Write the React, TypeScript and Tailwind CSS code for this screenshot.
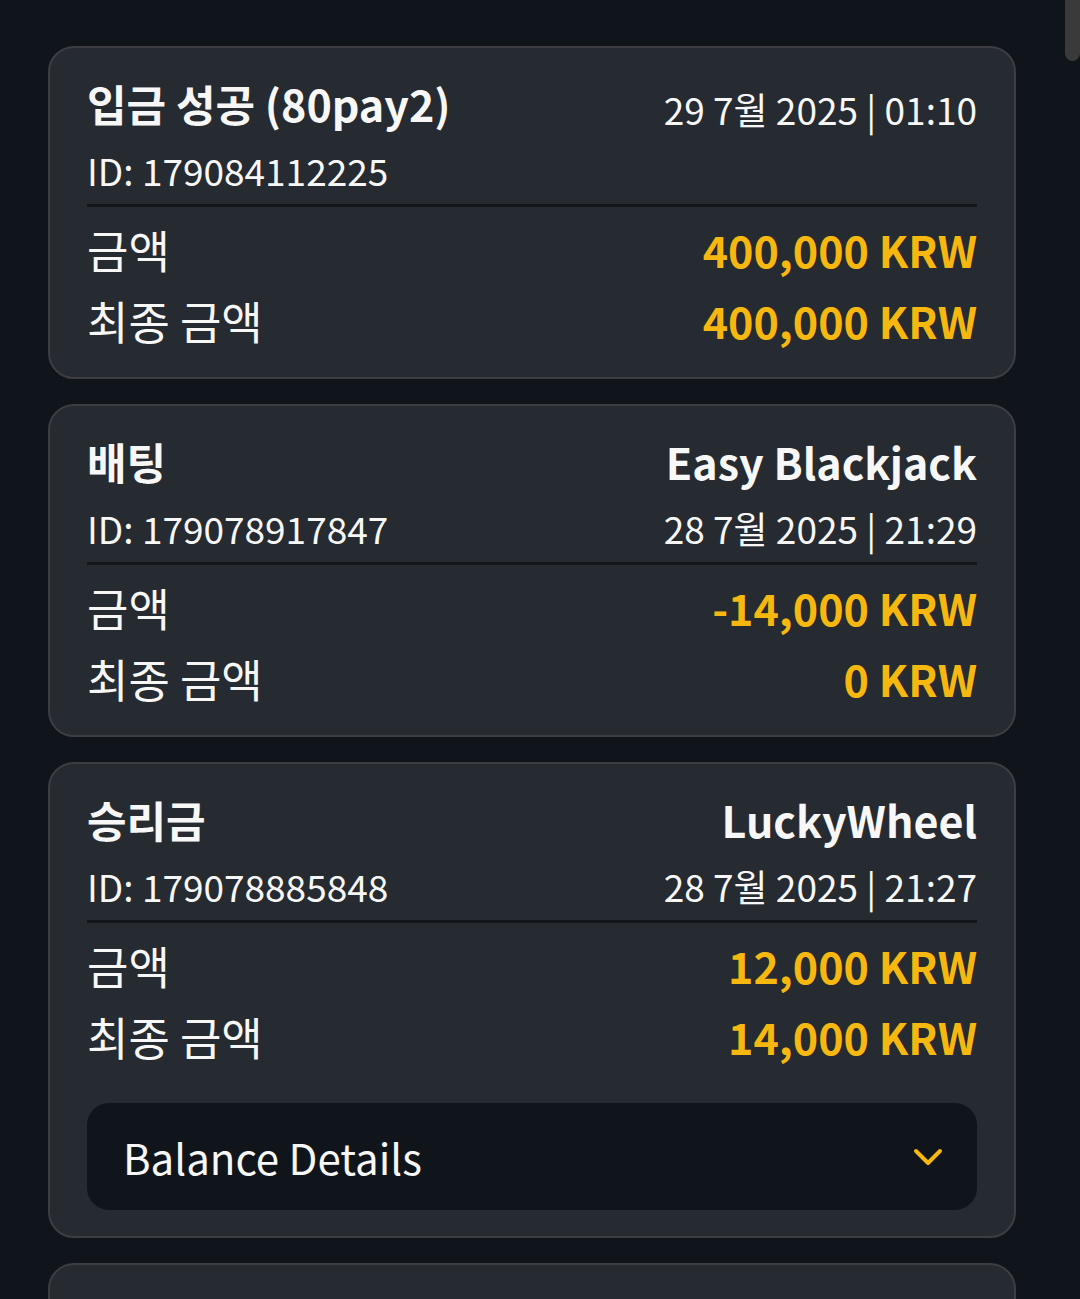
import { ChevronDown } from "lucide-react";

type Tx = {
  title: string;
  id: string;
  game?: string;
  date: string;
  amount: string;
  final: string;
  details?: boolean;
};

const txs: Tx[] = [
  {
    title: "입금 성공 (80pay2)",
    id: "179084112225",
    date: "29 7월 2025 | 01:10",
    amount: "400,000 KRW",
    final: "400,000 KRW",
  },
  {
    title: "배팅",
    id: "179078917847",
    game: "Easy Blackjack",
    date: "28 7월 2025 | 21:29",
    amount: "-14,000 KRW",
    final: "0 KRW",
  },
  {
    title: "승리금",
    id: "179078885848",
    game: "LuckyWheel",
    date: "28 7월 2025 | 21:27",
    amount: "12,000 KRW",
    final: "14,000 KRW",
    details: true,
  },
  {
    title: "입금 성공 (80pay2)",
    id: "179078012331",
    date: "28 7월 2025 | 20:02",
    amount: "20,000 KRW",
    final: "20,000 KRW",
  },
];

function TxCard({ tx }: { tx: Tx }) {
  return (
    <div className="rounded-[26px] border-2 border-[#3c3e43] bg-[#262a31] px-[37px] pt-[27px] pb-[21px]">
      {tx.game ? (
        <>
          <div className="flex items-baseline justify-between h-[56px] leading-[56px]">
            <span className="text-[43px] font-semibold">{tx.title}</span>
            <span className="text-[43px] font-semibold">{tx.game}</span>
          </div>
          <div className="mt-[15px] flex items-baseline justify-between h-[48px] leading-[48px] text-[37px]">
            <span>ID: {tx.id}</span>
            <span>{tx.date}</span>
          </div>
        </>
      ) : (
        <>
          <div className="flex items-end justify-between h-[56px] leading-[56px]">
            <span className="text-[43px] font-semibold">{tx.title}</span>
            <span className="text-[37px] leading-[44px]">{tx.date}</span>
          </div>
          <div className="mt-[15px] h-[48px] leading-[48px] text-[37px]">ID: {tx.id}</div>
        </>
      )}

      <div className="mt-[10px] h-[3px] bg-[#13171c]" />

      <div className="pt-[7px]">
        <div className="flex items-center justify-between h-[71px]">
          <span className="text-[45px]">금액</span>
          <span className="text-[43px] font-semibold text-[#f6b80f]">{tx.amount}</span>
        </div>
        <div className="flex items-center justify-between h-[71px]">
          <span className="text-[45px]">최종 금액</span>
          <span className="text-[43px] font-semibold text-[#f6b80f]">{tx.final}</span>
        </div>
      </div>

      {tx.details && (
        <div className="mt-[31px] mb-[5px] flex h-[107px] items-center justify-between rounded-[22px] bg-[#10151b] pl-[36px] pr-[25px]">
          <span className="text-[42px]">Balance Details</span>
          <ChevronDown className="h-[48px] w-[48px] text-[#f6b80f]" strokeWidth={2} />
        </div>
      )}
    </div>
  );
}

export default function App() {
  return (
    <div
      className="relative h-[1299px] overflow-hidden bg-[#10151b] text-[#f7f7f7]"
      style={{ fontFamily: '"Noto Sans CJK KR", "Noto Sans", sans-serif' }}
    >
      <div className="flex w-[968px] flex-col gap-[25px] pl-[48px] pt-[46px] box-content">
        {txs.map((tx) => (
          <TxCard key={tx.id} tx={tx} />
        ))}
      </div>
      <div className="absolute right-0 top-0 h-[61px] w-[15px] rounded-b-full bg-[#3a3a3a]" />
    </div>
  );
}
